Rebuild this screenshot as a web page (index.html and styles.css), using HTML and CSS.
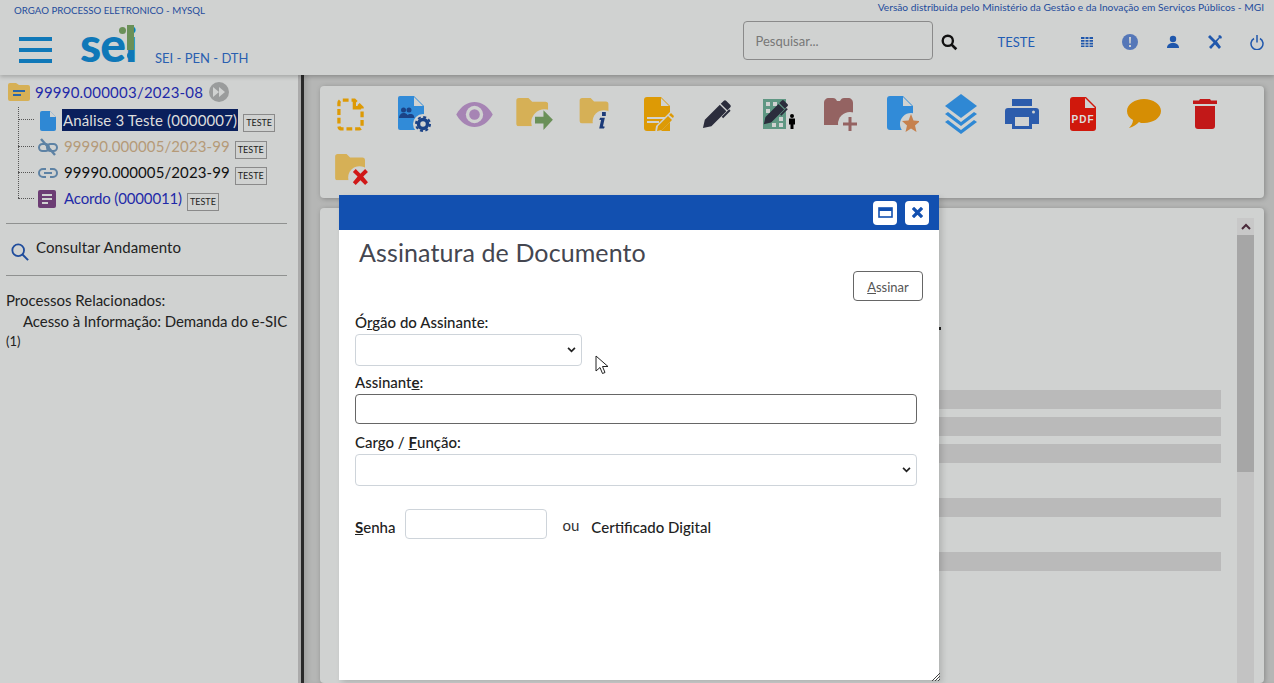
FILE: index.html
```html
<!doctype html>
<html lang="pt-BR">

<head>
  <title>SEI - Assinatura de Documento</title>
  <meta charset="utf-8" />
  <link rel="stylesheet" href="styles.css">
</head>

<body>
  <svg class="defs" width="0" height="0">
    <symbol id="folder" viewBox="0 0 34 30">
      <path d="M3 0h10l4 4h14a3 3 0 0 1 3 3v20a3 3 0 0 1-3 3H3a3 3 0 0 1-3-3V3a3 3 0 0 1 3-3z" fill="#d6b056" />
    </symbol>
    <symbol id="pen" viewBox="0 0 32 32">
      <path d="M1 31l2-9L19 6l7 7-16 16z M20 5l3-3c1-1 2-1 3 0l4 4c1 1 1 2 0 3l-3 3z" fill="#2b2d3c" />
      <path d="M24 16l5-5 1.500 1.500-8 8-1.500-1.500z" fill="#2b2d3c" />
    </symbol>
  </svg>

  <header class="topbar">
    <div class="topbar-info">
      <span class="org">ORGAO PROCESSO ELETRONICO - MYSQL</span>
      <span class="version">Versão distribuida pelo Ministério da Gestão e da Inovação em Serviços Públicos - MGI</span>
    </div>
    <div class="topbar-main">
      <div class="burger"><i></i><i></i><i></i></div>
      <div class="logo">sei<b class="logo-dot"></b><b class="logo-bang"></b></div>
      <span class="system">SEI - PEN - DTH</span>
      <div class="search">Pesquisar...</div>
      <svg class="search-icon" width="17" height="17" viewBox="0 0 20 20" fill="none" stroke="#111">
        <circle cx="8" cy="8" r="6" stroke-width="2.800" />
        <path d="M12.500 12.500L18 18" stroke-width="3.200" />
      </svg>
      <span class="unit">TESTE</span>
      <div class="tools">
        <svg width="14" height="12" viewBox="0 0 14 12" fill="#1f57ac">
          <path d="M1 1h3.500v2H1zM5.500 1h3v2h-3zM9.500 1H13v2H9.500zM1 4h3.500v1.800H1zM5.500 4h3v1.800h-3zM9.500 4H13v1.800H9.500zM1 6.800h3.500v1.800H1zM5.500 6.800h3v1.800h-3zM9.500 6.800H13v1.800H9.500zM1 9.500h3.500v1.500H1zM5.500 9.500h3v1.500h-3zM9.500 9.500H13v1.500H9.500z" />
        </svg>
        <svg width="16" height="16" viewBox="0 0 16 16">
          <circle cx="8" cy="8" r="8" fill="#5577b8" />
          <path d="M7 3h2l-.3 6.500H7.300zM7 11h2v2H7z" fill="#d0d2d1" />
        </svg>
        <svg width="14" height="14" viewBox="0 0 14 14" fill="#1f57ac">
          <circle cx="7" cy="4" r="3.200" />
          <path d="M1 13c0-3.500 2.500-5 6-5s6 1.500 6 5z" />
        </svg>
        <svg width="14" height="14" viewBox="0 0 14 14" fill="#1f57ac">
          <path d="M0 2l2-2 4 4 1.500 1.500L11 2l-1-1 2-1 2 2-1 2-1-1-3 3.500L13 12l-2 2-4-4.500L3 14l-2-2 4.500-4.500L4 6 0 2z" />
        </svg>
        <svg width="14" height="15" viewBox="0 0 14 15" fill="none" stroke="#1f57ac" stroke-width="1.500">
          <path d="M4 3.500a6 6 0 1 0 6 0M7 0v7.500" />
        </svg>
      </div>
    </div>
  </header>

  <main class="page">
    <aside class="sidebar">
      <div class="tree-root">
        <svg width="22" height="18" viewBox="0 0 22 18">
          <path d="M2 0h6l3 2h9a2 2 0 0 1 2 2v12a2 2 0 0 1-2 2H2a2 2 0 0 1-2-2V2a2 2 0 0 1 2-2z" fill="#d6b056" />
          <path d="M5 7h12v2H5zM5 11h8v2H5z" fill="#2a66a8" />
        </svg>
        <a class="link-blue root-text">99990.000003/2023-08</a>
        <svg class="root-play" width="20" height="20" viewBox="0 0 20 20">
          <circle cx="10" cy="10" r="10" fill="#9a9c9c" />
          <path d="M4 5l6 5-6 5zM10 5l6 5-6 5z" fill="#d0d2d1" />
        </svg>
      </div>
      <ul class="tree">
        <li class="tree-row first-row">
          <svg class="tree-icon" width="16" height="20" viewBox="0 0 16 20">
            <path d="M2 0h8l6 6v12a2 2 0 0 1-2 2H2a2 2 0 0 1-2-2V2a2 2 0 0 1 2-2z" fill="#2f88d4" />
            <path d="M10 0l6 6h-6z" fill="#d0d2d1" />
          </svg>
          <a class="selected">Análise 3 Teste (0000007)</a>
          <span class="tag">TESTE</span>
        </li>
        <li class="tree-row">
          <svg class="tree-icon" width="20" height="18" viewBox="0 0 20 18" fill="none" stroke="#5d82a4" stroke-width="2">
            <rect x="1" y="6" width="10" height="7" rx="3.500" />
            <rect x="9" y="6" width="10" height="7" rx="3.500" />
            <path d="M3 1l14 16" stroke-width="2.400" />
          </svg>
          <a class="link-tan">99990.000005/2023-99</a>
          <span class="tag">TESTE</span>
        </li>
        <li class="tree-row">
          <svg class="tree-icon" width="20" height="10" viewBox="0 0 20 10" fill="none" stroke="#5d82a4" stroke-width="2">
            <path d="M8 1H5a4 4 0 0 0 0 8h3M12 1h3a4 4 0 0 1 0 8h-3M6 5h8" />
          </svg>
          <a class="link-black">99990.000005/2023-99</a>
          <span class="tag">TESTE</span>
        </li>
        <li class="tree-row">
          <svg class="tree-icon" width="18" height="18" viewBox="0 0 18 18">
            <rect width="18" height="18" rx="2" fill="#6c3d74" />
            <path d="M4 4h10v2H4zM4 8h10v2H4zM4 12h6v2H4z" fill="#d0d2d1" />
          </svg>
          <a class="link-blue link-doc">Acordo (0000011)</a>
          <span class="tag">TESTE</span>
        </li>
      </ul>
      <hr class="rule">
      <div class="consult">
        <svg class="consult-icon" width="18" height="18" viewBox="0 0 20 20" fill="none" stroke="#1f4c9c">
          <circle cx="8" cy="8" r="6.500" stroke-width="2" />
          <path d="M12.500 12.500L19 19" stroke-width="2.200" />
        </svg>
        <span class="consult-text">Consultar Andamento</span>
      </div>
      <hr class="rule">
      <p class="related-title">Processos Relacionados:</p>
      <p class="related-item">Acesso à Informação: Demanda do e-SIC</p>
      <p class="related-count">(1)</p>
    </aside>

    <section class="content">
      <div class="card toolbar">
        <div class="tool">
          <svg width="27" height="35" viewBox="0 0 28 34" fill="none" stroke="#dd9a05" stroke-width="3.400">
            <path d="M12 2H5a3 3 0 0 0-3 3v24a3 3 0 0 0 3 3h18a3 3 0 0 0 3-3V10l-8-8h-3" stroke-dasharray="6 3" />
            <path d="M18 3v7h7" />
          </svg>
        </div>
        <div class="tool nudge-lg">
          <svg width="33" height="36" viewBox="0 0 33 36">
            <path d="M2 0h14l10 10v24H2a2 2 0 0 1-2-2V2a2 2 0 0 1 2-2z" fill="#318bd8" />
            <path d="M16 1l9 9h-9z" fill="#d0d2d1" />
            <circle cx="5.500" cy="14" r="2.500" fill="#1b4387" />
            <circle cx="11" cy="14" r="2.500" fill="#1b4387" />
            <path d="M1 22c0-3 2-5 4.500-5 2 0 3 .500 4 2 1-1.500 5-1.500 6 0l1 3z" fill="#1b4387" />
            <circle cx="25" cy="28" r="10" fill="#d0d2d1" />
            <circle cx="25" cy="28" r="4.500" fill="none" stroke="#1b4387" stroke-width="3.500" />
            <circle cx="25" cy="28" r="7" fill="none" stroke="#1b4387" stroke-width="2" stroke-dasharray="3 2.500" />
          </svg>
        </div>
        <div class="tool nudge">
          <svg width="37" height="25" viewBox="0 0 38 26">
            <path d="M0 13C5 4 12 0 19 0s14 4 19 13c-5 9-12 13-19 13S5 22 0 13z" fill="#a684b4" />
            <circle cx="19" cy="13" r="9" fill="#d0d2d1" />
            <circle cx="19" cy="13" r="5.500" fill="#a684b4" />
          </svg>
        </div>
        <div class="tool nudge">
          <svg width="38" height="32" viewBox="0 0 40 34">
            <use href="#folder" width="34" height="30" />
            <circle cx="30" cy="26" r="14" fill="#d0d2d1" />
            <path d="M20 20h9v-7l10 10-10 11v-7h-9z" fill="#6a9058" />
          </svg>
        </div>
        <div class="tool">
          <svg width="33" height="32" viewBox="0 0 34 34">
            <use href="#folder" width="33" height="27" />
            <circle cx="27" cy="25" r="12" fill="#d0d2d1" />
            <path d="M25 15h4v4h-4zM23 21h5l-2 9 2 .500-1 2h-5l2-9-2-.500z" fill="#1b3a78" />
          </svg>
        </div>
        <div class="tool nudge-lg">
          <svg width="30" height="35" viewBox="0 0 30 35">
            <path d="M3 0h14l9 9v25H3a3 3 0 0 1-3-3V3a3 3 0 0 1 3-3z" fill="#dd9a05" />
            <path d="M17 1l8 8h-8zM3 20h18v2H3zM3 24h12v2H3z" fill="#d0d2d1" />
            <path d="M11 36l1-7 14-14 5 5-14 14z" fill="#d0d2d1" />
            <path d="M13 34l1-5 10-10 4 4-10 10zM25 18l2-2 3 3-1 2z" fill="#dd9a05" />
          </svg>
        </div>
        <div class="tool">
          <svg width="30" height="30"><use href="#pen" /></svg>
        </div>
        <div class="tool nudge">
          <svg width="33" height="30" viewBox="0 0 33 30">
            <rect width="23" height="30" fill="#5f9783" />
            <path d="M3 3h4v4H3zM10 3h4v4h-4zM3 10h4v4H3zM16 18h4v4h-4zM16 24h4v4h-4zM9 24h4v4H9z" fill="#d0d2d1" />
            <use href="#pen" width="26" height="26" />
            <circle cx="29" cy="17" r="2" fill="#000" />
            <path d="M26 19.500h6v6h-1.500V30h-3v-4.500H26z" fill="#000" />
          </svg>
        </div>
        <div class="tool nudge">
          <svg width="33" height="34" viewBox="0 0 33 34">
            <path d="M0 28V6c0-3 2-5 5-5h4c2 0 3 1 4 3h3c1-2 2-3 4-3h4c3 0 5 2 5 5v22z" fill="#946362" />
            <circle cx="26" cy="27" r="12" fill="#d0d2d1" />
            <path d="M24.500 20h3v5.500H33v3h-5.500V34h-3v-5.500H19v-3h5.500z" fill="#946362" />
          </svg>
        </div>
        <div class="tool nudge-lg">
          <svg width="32" height="36" viewBox="0 0 32 36">
            <path d="M3 0h13l10 10v24H3a3 3 0 0 1-3-3V3a3 3 0 0 1 3-3z" fill="#318bd8" />
            <path d="M16 1l9 9h-9z" fill="#d0d2d1" />
            <circle cx="24" cy="28" r="11" fill="#d0d2d1" />
            <path d="M24 18l2.500 6.500 6.500.500-5 4.500 1.500 6.500-5.500-3.500-5.500 3.500 1.500-6.500-5-4.500 6.500-.500z" fill="#c6814e" />
          </svg>
        </div>
        <div class="tool">
          <svg width="32" height="40" viewBox="0 0 32 40" fill="#2f88d4">
            <path d="M16 0l16 12-16 12L0 12z" />
            <path d="M3 18l13 10 13-10 3 2-16 12L0 20z" />
            <path d="M3 26l13 10 13-10 3 2-16 12L0 28z" />
          </svg>
        </div>
        <div class="tool">
          <svg width="34" height="30" viewBox="0 0 34 30">
            <path d="M7 0h20v7H7z" fill="#2c5cac" />
            <path d="M3 9h28a3 3 0 0 1 3 3v13h-7v5H7v-5H0V12a3 3 0 0 1 3-3z" fill="#2c5cac" />
            <path d="M10 18h14v9H10z" fill="#d0d2d1" />
            <circle cx="28.500" cy="13" r="1.500" fill="#d0d2d1" />
          </svg>
        </div>
        <div class="tool">
          <svg width="26" height="34" viewBox="0 0 26 34">
            <path d="M3 0h13l10 10v21a3 3 0 0 1-3 3H3a3 3 0 0 1-3-3V3a3 3 0 0 1 3-3z" fill="#d0180c" />
            <path d="M15 1l10 10H15z" fill="#d0d2d1" />
            <text class="pdf-text" x="13" y="26">PDF</text>
          </svg>
        </div>
        <div class="tool">
          <svg width="34" height="30" viewBox="0 0 34 30">
            <path d="M17 0c9 0 17 5 17 12s-8 12-17 12c-2 0-4 0-5-1-2 2-6 5-10 6 2-2 4-5 4-8-4-2-6-5-6-9C0 5 8 0 17 0z" fill="#d68e04" />
          </svg>
        </div>
        <div class="tool">
          <svg width="24" height="30" viewBox="0 0 24 30" fill="#c21818">
            <path d="M7 0h10l1 1.500h6V5H0V1.500h6z" />
            <path d="M2 7h20v20a3 3 0 0 1-3 3H5a3 3 0 0 1-3-3z" />
          </svg>
        </div>
        <div class="tool">
          <svg width="36" height="32" viewBox="0 0 36 34">
            <use href="#folder" width="34" height="28" />
            <circle cx="27" cy="25" r="12" fill="#d0d2d1" />
            <path d="M20 19l3-3 5 5 5-5 3 3-5 5 5 6-3 3-5-5-5 5-3-3 5-6z" fill="#d01818" />
          </svg>
        </div>
      </div>

      <div class="card viewer">
        <div class="viewer-body">
          <i class="stray-mark"></i>
          <div class="stripe stripe-first"></div>
          <div class="stripe"></div>
          <div class="stripe"></div>
          <div class="stripe stripe-gap"></div>
          <div class="stripe stripe-gap"></div>
        </div>
        <div class="scrollbar">
          <div class="scroll-btn">
            <svg width="10" height="7" viewBox="0 0 10 7" fill="none" stroke="#4a2a3a" stroke-width="2">
              <path d="M1 6l4-4 4 4" />
            </svg>
          </div>
          <div class="scroll-thumb"></div>
        </div>
      </div>
    </section>
  </main>

  <div class="modal">
    <div class="modal-head">
      <button class="modal-btn">
        <svg width="15" height="11" viewBox="0 0 15 11" fill="none" stroke="#1250b0" stroke-width="1.600">
          <rect x="1" y="1" width="13" height="9" />
          <path d="M1 2.500h13" stroke-width="3" />
        </svg>
      </button>
      <button class="modal-btn">
        <svg width="11" height="11" viewBox="0 0 12 12" stroke="#1250b0" stroke-width="3.600">
          <path d="M1 1l10 10M11 1L1 11" />
        </svg>
      </button>
    </div>
    <h1 class="modal-title">Assinatura de Documento</h1>
    <div class="modal-actions">
      <button class="sign-btn"><u>A</u>ssinar</button>
    </div>
    <form class="sign-form">
      <label class="field-label">Ó<u>r</u>gão do Assinante:</label>
      <div class="select select-short">
        <svg width="9" height="6" viewBox="0 0 10 7" fill="none" stroke="#222" stroke-width="2">
          <path d="M1 1l4 4 4-4" />
        </svg>
      </div>
      <label class="field-label field-next">Assinant<u class="key">e</u>:</label>
      <input class="text-input" type="text">
      <label class="field-label field-far">Cargo / <u class="key">F</u>unção:</label>
      <div class="select">
        <svg width="9" height="6" viewBox="0 0 10 7" fill="none" stroke="#222" stroke-width="2">
          <path d="M1 1l4 4 4-4" />
        </svg>
      </div>
      <div class="password-row">
        <label class="field-label row-label"><u class="key">S</u>enha</label>
        <input class="password-input" type="password">
        <span class="or">ou</span>
        <span class="field-label row-label">Certificado Digital</span>
      </div>
    </form>
    <svg class="grip" width="8" height="8" viewBox="0 0 8 8" stroke="#444">
      <path d="M0 8l8-8M3 8l5-5M6 8l2-2" />
    </svg>
  </div>

  <svg class="pointer" width="14" height="20" viewBox="0 0 14 20">
    <path d="M1 1v15l4-3.500 2.500 6 2.500-1-2.500-6H13z" fill="#fff" stroke="#222" />
  </svg>
</body>

</html>
```

FILE: styles.css
```css
html, body {
  margin: 0;
  height: 683px;
  overflow: hidden;
}

body {
  display: flex;
  flex-direction: column;
  font-family: "Lato", "Open Sans", sans-serif;
  font-size: 15px;
  color: #222;
  background-color: #d0d2d1;
}

.defs {
  position: absolute;
}

/* top bar */
.topbar {
  height: 75px;
  flex: none;
  background-color: #d0d2d1;
  box-shadow: 0 2px 4px rgba(0, 0, 0, 0.2);
  position: relative;
  z-index: 1;
}

.topbar-info {
  display: flex;
  justify-content: space-between;
  align-items: flex-start;
  padding: 0 10px 0 14px;
  height: 20px;
  color: #1f4c9c;
}

.org {
  margin-top: 4px;
  font-size: 9.7px;
}

.version {
  margin-top: 1px;
  font-size: 10.2px;
}

.topbar-main {
  display: flex;
  align-items: center;
  height: 44px;
}

.burger {
  width: 33px;
  margin: 15px 0 0 19px;
  display: flex;
  flex-direction: column;
  gap: 7px;
}

.burger i {
  height: 4px;
  background-color: #0f78b8;
}

.logo {
  position: relative;
  margin-left: 28px;
  width: 55px;
  height: 44px;
  font-size: 48px;
  line-height: 48px;
  font-weight: 900;
  color: #0f78b8;
  letter-spacing: -1px;
}

.logo-dot {
  position: absolute;
  left: 39px;
  top: 7px;
  width: 7px;
  height: 7px;
  border-radius: 50%;
  background-color: #6a9058;
}

.logo-bang {
  position: absolute;
  left: 47px;
  top: 5px;
  width: 7px;
  height: 25px;
  background-color: #6a9058;
}

.logo-bang:after {
  content: "";
  position: absolute;
  left: 0;
  top: 27px;
  width: 7px;
  height: 7px;
  border-radius: 50%;
  background-color: #0f78b8;
}

.system {
  margin: 32px 0 0 20px;
  font-size: 13px;
  color: #2a5fb0;
}

.search {
  box-sizing: border-box;
  width: 190px;
  height: 39px;
  margin: -4px 0 0 495px;
  padding: 11px 11px;
  border: 1px solid #8a8a8a;
  border-radius: 4px;
  font-size: 13px;
  color: #777;
}

.search-icon {
  margin-left: 8px;
}

.unit {
  margin-left: 39px;
  font-size: 13px;
  color: #1f5cb4;
}

.tools {
  display: flex;
  align-items: center;
  gap: 28px;
  margin-left: 45px;
}

/* left tree */
.page {
  flex: 1;
  display: flex;
  min-height: 0;
}

.sidebar {
  box-sizing: border-box;
  width: 304px;
  flex: none;
  padding: 8px 16px 0 6px;
  border-right: 3px solid #2a2a2a;
  background-color: #d0d2d1;
  box-shadow: inset -3px 0 0 #ababab;
}

.tree-root {
  display: flex;
  align-items: center;
  height: 18px;
  margin-left: 2px;
}

.root-text {
  margin-left: 5px;
  letter-spacing: 0.22px;
}

.root-play {
  margin-left: 6px;
}

.link-blue {
  color: #1f2aa8;
}

.link-tan {
  color: #b59a78;
  letter-spacing: 0.1px;
}

.link-black {
  color: #111;
  letter-spacing: 0.1px;
}

.link-doc {
  letter-spacing: -0.15px;
}

.tree {
  list-style: none;
  margin: 6px 0 0 12px;
  padding: 0;
  border-left: 1px dotted #555;
  height: 91px;
}

.tree-row {
  display: flex;
  align-items: center;
  height: 26px;
  position: relative;
  padding-left: 46px;
  margin-left: -1px;
  white-space: nowrap;
}

.tree-row a {
  margin-top: -2px;
}

.first-row {
  height: 27px;
}

.tree-row:before {
  content: "";
  position: absolute;
  left: 0;
  top: 12px;
  width: 16px;
  border-top: 1px dotted #555;
}

.tree-icon {
  position: absolute;
  left: 20px;
  top: 50%;
  transform: translateY(-50%);
}

.first-row .tree-icon {
  left: 22px;
}

.selected {
  background-color: #0a1f5c;
  color: #ddd;
  margin-left: -2px;
  padding: 2px 1px;
  letter-spacing: 0.13px;
}

.tag {
  margin: 5px 0 0 5px;
  padding: 2px;
  border: 1px solid #8a8a8a;
  font-size: 9px;
  line-height: 12px;
  color: #222;
}

.rule {
  border: 0;
  border-top: 1px solid #8f9190;
  margin: 0;
  width: 281px;
}

.sidebar > .rule:first-of-type {
  margin-top: 25px;
}

.consult {
  display: flex;
  align-items: center;
  height: 51px;
  padding-left: 5px;
}

.consult-icon {
  margin: 4px 7px 0 0;
}

.consult-text {
  margin-top: -5px;
  letter-spacing: 0.1px;
}

.related-title {
  margin: 15px 0 0;
}

.related-item {
  margin: 3px 0 0 17px;
  white-space: nowrap;
  letter-spacing: -0.08px;
}

.related-count {
  margin: 3px 0 0;
  font-size: 13px;
}

/* right side */
.content {
  flex: 1;
  min-width: 0;
  display: flex;
  flex-direction: column;
  padding: 11px 10px 0 16px;
  background-color: #b5b6b5;
  box-shadow: inset 6px 0 6px -4px rgba(0, 0, 0, 0.15);
}

.card {
  background-color: #d0d2d1;
  border-radius: 4px;
  box-shadow: 1px 1px 5px rgba(0, 0, 0, 0.25);
}

.toolbar {
  display: flex;
  flex-wrap: wrap;
  flex: none;
  height: 112px;
}

.tool {
  width: 61px;
  height: 56px;
  box-sizing: border-box;
  display: flex;
  align-items: center;
  justify-content: center;
}

.nudge {
  padding-left: 3px;
}

.nudge-lg {
  padding-left: 6px;
}

.pdf-text {
  font-family: "Liberation Sans", sans-serif;
  font-weight: 700;
  font-size: 10px;
  letter-spacing: 1px;
  text-anchor: middle;
  fill: #ddd;
}

.viewer {
  flex: 1;
  display: flex;
  min-height: 0;
  margin-top: 10px;
  padding: 10px 10px 0 22px;
  overflow: hidden;
}

.viewer-body {
  flex: 1;
  margin-right: 16px;
}

/* end of a text line that sticks out from under the dialog */
.stray-mark {
  position: absolute;
  left: 939px;
  top: 327px;
  width: 2px;
  height: 3px;
  background-color: #222;
}

.stripe {
  height: 19px;
  margin-bottom: 8px;
  background-color: #bababa;
}

.stripe-first {
  margin-top: 172px;
}

.stripe-gap {
  margin-top: 35px;
}

.scrollbar {
  width: 17px;
  background-color: #c3c3c3;
}

.scroll-btn {
  height: 17px;
  display: flex;
  align-items: center;
  justify-content: center;
  background-color: #c8c8c8;
}

.scroll-thumb {
  height: 237px;
  background-color: #a6a6a6;
}

/* dialog */
.modal {
  position: absolute;
  left: 339px;
  top: 195px;
  width: 600px;
  height: 485px;
  background-color: #fff;
  box-shadow: 3px 3px 6px rgba(0, 0, 0, 0.15);
  z-index: 2;
}

.modal-head {
  display: flex;
  justify-content: flex-end;
  align-items: center;
  gap: 8px;
  height: 35px;
  padding-right: 10px;
  background-color: #1250b0;
}

.modal-btn {
  width: 24px;
  height: 24px;
  padding: 0;
  border: 0;
  border-radius: 4px;
  background-color: #fff;
  display: flex;
  align-items: center;
  justify-content: center;
}

.modal-title {
  margin: 7px 0 0 20px;
  font-size: 25px;
  line-height: 30px;
  font-weight: 400;
  letter-spacing: 0.1px;
  color: #444650;
}

.modal-actions {
  display: flex;
  justify-content: flex-end;
  margin-top: 4px;
  padding-right: 16px;
}

.sign-btn {
  width: 70px;
  height: 30px;
  padding: 1px 0 0;
  border: 1px solid #666;
  border-radius: 4px;
  background-color: #fff;
  font-family: inherit;
  font-size: 13px;
  color: #555;
}

.sign-form {
  display: flex;
  flex-direction: column;
  align-items: flex-start;
  padding: 12px 22px 0 16px;
}

.field-label {
  font-size: 15px;
  line-height: 18px;
  font-weight: 500;
  color: #222;
  margin-bottom: 3px;
}

.key {
  font-weight: 700;
}

.field-next {
  margin-top: 7px;
}

.field-far {
  margin-top: 9px;
}

.select {
  box-sizing: border-box;
  width: 100%;
  height: 32px;
  padding-right: 5px;
  border: 1px solid #ced4da;
  border-radius: 4px;
  display: flex;
  align-items: center;
  justify-content: flex-end;
}

.select-short {
  width: 227px;
}

.text-input {
  box-sizing: border-box;
  width: 100%;
  height: 30px;
  border: 1px solid #666;
  border-radius: 4px;
}

.password-row {
  display: flex;
  align-items: center;
  margin-top: 23px;
}

.row-label {
  margin: 6px 0 0;
}

.password-input {
  box-sizing: border-box;
  width: 142px;
  height: 30px;
  margin-left: 10px;
  border: 1px solid #ced4da;
  border-radius: 4px;
}

.or {
  margin: 2px 12px 0 15px;
  color: #333;
}

.grip {
  position: absolute;
  right: -1px;
  bottom: -1px;
}

.pointer {
  position: absolute;
  left: 595px;
  top: 355px;
  z-index: 3;
}
```
